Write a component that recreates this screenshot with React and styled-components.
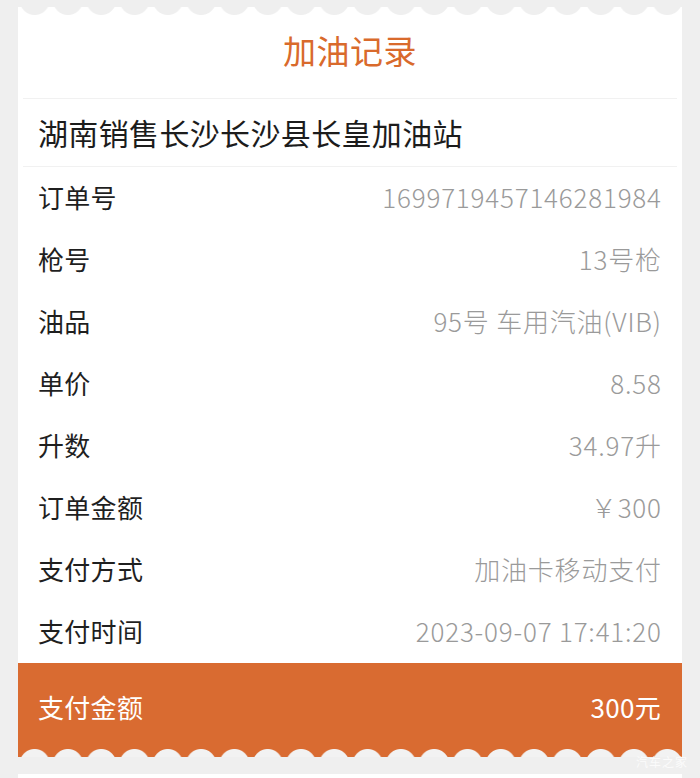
import { createGlobalStyle, styled } from "styled-components";

const GlobalStyle = createGlobalStyle`
  body {
    margin: 0;
    background: #efefef;
    font-family: "Noto Sans CJK SC", "Noto Sans", sans-serif;
  }
`;

const Page = styled.div`
  position: relative;
  width: 700px;
  height: 778px;
  overflow: hidden;
  box-sizing: border-box;
  padding: 7px 18px 0;
`;

const Card = styled.section`
  position: relative;
  background: #ffffff;

  &::before {
    content: "";
    position: absolute;
    left: 0;
    right: 0;
    top: 0;
    height: 8px;
    background-image: radial-gradient(
      circle at 50% -7px,
      #efefef 14.5px,
      transparent 15.5px
    );
    background-size: 33.3px 8px;
    background-repeat: repeat-x;
  }
`;

const Header = styled.header`
  height: 92px;
  margin: 0 5px;
  display: flex;
  align-items: center;
  justify-content: center;
  padding-bottom: 5px;
  box-sizing: border-box;
  border-bottom: 1px solid #f1f1f1;
`;

const Title = styled.h1`
  margin: 0;
  font-size: 33px;
  font-weight: 400;
  color: #d96a2c;
  letter-spacing: 0.5px;
`;

const Station = styled.div`
  height: 68px;
  margin: 0 5px;
  padding: 0 15px 2px;
  box-sizing: border-box;
  display: flex;
  align-items: center;
  border-bottom: 1px solid #f1f1f1;
  font-size: 30px;
  letter-spacing: 0.35px;
  color: #1c1c1c;
`;

const Row = styled.div`
  height: 62px;
  padding: 0 21px 3px 20px;
  box-sizing: border-box;
  display: flex;
  align-items: center;
  justify-content: space-between;
  font-size: 26px;
`;

const Label = styled.span`
  color: #1f1f1f;
  letter-spacing: 0.3px;
`;

const Value = styled.span`
  color: #9a9a9a;
  font-weight: 300;
  letter-spacing: 0.8px;
  margin-right: -0.8px;
`;

const TotalBar = styled.div`
  position: relative;
  height: 94px;
  padding: 0 21px 7px 20px;
  box-sizing: border-box;
  display: flex;
  align-items: center;
  justify-content: space-between;
  background: #d96b31;
  color: #ffffff;
  font-size: 26px;
  letter-spacing: 0.3px;

  &::after {
    content: "";
    position: absolute;
    left: 0;
    right: 0;
    bottom: 0;
    height: 8px;
    background-image: radial-gradient(
      circle at 50% calc(100% + 7px),
      #f2f2f2 14.5px,
      transparent 15.5px
    );
    background-size: 33.3px 8px;
    background-repeat: repeat-x;
  }
`;

const NextCard = styled.div`
  height: 10px;
  margin-top: 17px;
  background: #ffffff;
`;

const Watermark = styled.span`
  position: absolute;
  right: 12px;
  bottom: 8px;
  font-size: 12px;
  color: rgba(255, 255, 255, 0.75);
  letter-spacing: 1px;
`;

const rows = [
  ["订单号", "1699719457146281984"],
  ["枪号", "13号枪"],
  ["油品", "95号 车用汽油(VIB)"],
  ["单价", "8.58"],
  ["升数", "34.97升"],
  ["订单金额", "￥300"],
  ["支付方式", "加油卡移动支付"],
  ["支付时间", "2023-09-07 17:41:20"],
];

const App = () => {
  return (
    <Page>
      <GlobalStyle />
      <Card>
        <Header>
          <Title>加油记录</Title>
        </Header>
        <Station>湖南销售长沙长沙县长皇加油站</Station>
        {rows.map(([label, value]) => (
          <Row key={label}>
            <Label>{label}</Label>
            <Value>{value}</Value>
          </Row>
        ))}
        <TotalBar>
          <span>支付金额</span>
          <span>300元</span>
        </TotalBar>
      </Card>
      <NextCard />
      <Watermark>汽车之家</Watermark>
    </Page>
  );
};

export default App;
